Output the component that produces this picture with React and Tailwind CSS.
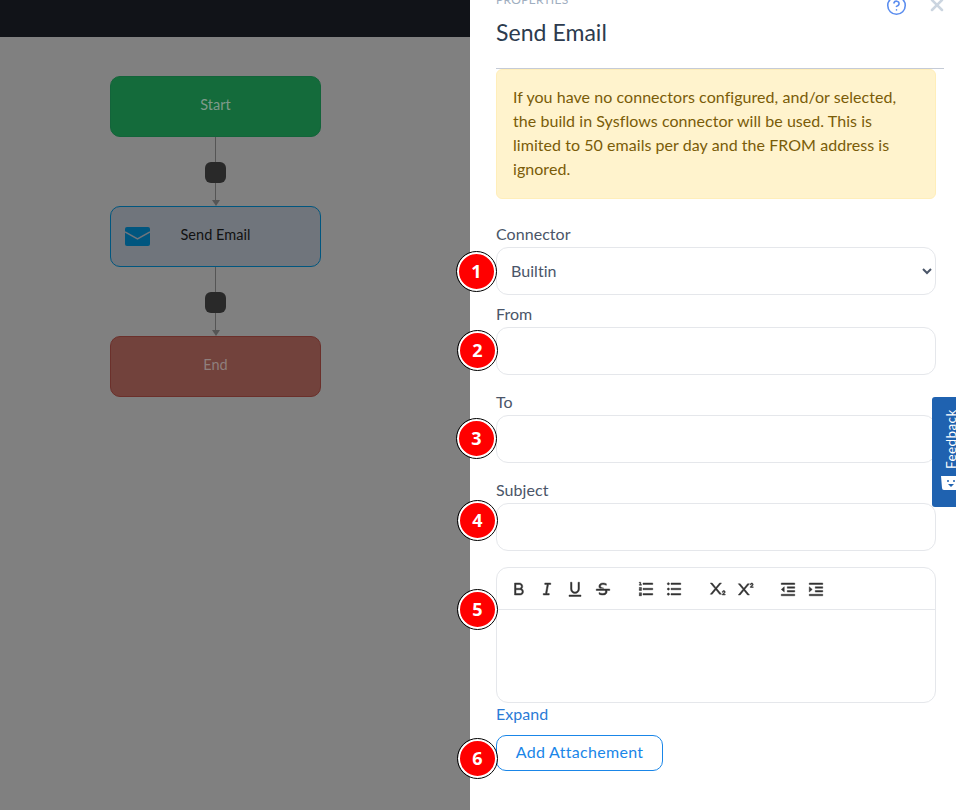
import { CircleHelp, X } from 'lucide-react'
import {
  RiBold,
  RiItalic,
  RiUnderline,
  RiStrikethrough,
  RiListOrdered,
  RiListUnordered,
  RiSubscript,
  RiSuperscript,
  RiIndentDecrease,
  RiIndentIncrease
} from 'react-icons/ri'

const font = 'font-["Lato","Noto_Sans",sans-serif]'

function Connector() {
  return (
    <div className="relative h-[69px] flex flex-col items-center">
      <div className="w-px h-[64px] bg-[#555555]" />
      <div className="w-0 h-0 border-x-[4px] border-x-transparent border-t-[6px] border-t-[#555555]" />
      <div className="absolute top-[25px] left-[95px] w-[21px] h-[21px] rounded-[6px] bg-[#292929]" />
    </div>
  )
}

function Field({ label, marginTop }) {
  return (
    <div className={marginTop}>
      <div className="h-[24px] leading-[22px] text-[#4a5568]">{label}</div>
      <input type="text" className="block w-full h-[48px] bg-white border border-[#e5e7eb] rounded-[12px]" />
    </div>
  )
}

function Badge({ n, top, left }) {
  return (
    <div
      className="absolute w-[39px] h-[39px] rounded-full bg-[#ff0000] border-2 border-white outline outline-1 outline-black flex items-center justify-center text-white font-bold text-[18px] font-['Open_Sans',sans-serif]"
      style={{ top, left }}
    >
      {n}
    </div>
  )
}

export default function App() {
  const toolbarGroups = [
    [RiBold, RiItalic, RiUnderline, RiStrikethrough],
    [RiListOrdered, RiListUnordered],
    [RiSubscript, RiSuperscript],
    [RiIndentDecrease, RiIndentIncrease]
  ]

  return (
    <div className={`relative flex w-[956px] h-[810px] overflow-hidden text-[16px] tracking-[0.05px] ${font}`}>
      {/* dimmed canvas */}
      <div className="w-[470px] shrink-0 bg-[#808080]">
        <div className="h-[37px] bg-[#111318]" />
        <div className="ml-[110px] mt-[39px] w-[211px]">
          <div className="h-[61px] pb-[4px] rounded-[10px] bg-[#146b3b] border border-[#13643a] flex items-center justify-center text-[14.5px] text-[#7f9a8a]">
            Start
          </div>
          <Connector />
          <div className="relative h-[61px] pb-[4px] rounded-[10px] bg-[#70757c] border border-[#00567f] flex items-center justify-center text-[14.5px] text-[#111111]">
            <svg className="absolute left-[14px] top-[20px]" width="25" height="19" viewBox="0 0 25 19">
              <rect width="25" height="19" rx="2" fill="#00567f" />
              <path d="M0 5 L12.5 12 L25 5" fill="none" stroke="#70757c" strokeWidth="1.5" />
            </svg>
            Send Email
          </div>
          <Connector />
          <div className="h-[61px] pb-[4px] rounded-[10px] bg-[#72423c] border border-[#6b302b] flex items-center justify-center text-[14.5px] text-[#8f7f7d]">
            End
          </div>
        </div>
      </div>

      {/* properties panel */}
      <div className="w-[486px] shrink-0 bg-white">
        <div className="relative -mt-[8px] ml-[26px] mr-[12px] h-[77px] border-b border-[#c5cbd6]">
          <div className="text-[12px] leading-[16px] tracking-[0.3px] text-[#a0aec0]">PROPERTIES</div>
          <div className="mt-[8px] text-[23px] leading-[32px] text-[#2d3b4e]">Send Email</div>
          <CircleHelp className="absolute top-[3px] left-[390px] text-[#5b8def]" size={21} strokeWidth={1.8} />
          <X className="absolute top-[3px] left-[431px] text-[#cbd5e0]" size={20} strokeWidth={3} />
        </div>

        <div className="ml-[26px] mr-[20px]">
          <div className="h-[130px] px-[16px] pt-[15px] bg-[#fff3cd] border border-[#ffeeba] rounded-[6px] text-[#7a5c08] leading-[24px]">
            If you have no connectors configured, and/or selected, the build in Sysflows connector will be used. This is limited to 50 emails per day and the FROM address is ignored.
          </div>

          <div className="mt-[24px]">
            <div className="h-[24px] leading-[22px] text-[#4a5568]">Connector</div>
            <select className="block w-full h-[48px] pl-[10px] pr-[2px] pb-[2px] bg-white border border-[#e5e7eb] rounded-[12px] text-[#4a5568]">
              <option>Builtin</option>
            </select>
          </div>
          <Field label="From" marginTop="mt-[8px]" />
          <Field label="To" marginTop="mt-[16px]" />
          <Field label="Subject" marginTop="mt-[16px]" />

          <div className="mt-[16px] h-[136px] border border-[#e5e7eb] rounded-[12px]">
            <div className="h-[42px] pl-[13px] flex items-center gap-[25px] border-b border-[#e5e7eb] text-[#333333]">
              {toolbarGroups.map((group, i) => (
                <div key={i} className="flex items-center gap-[10px]">
                  {group.map((Icon, j) => (
                    <Icon key={j} size={18} stroke="currentColor" strokeWidth={0.6} />
                  ))}
                </div>
              ))}
            </div>
          </div>

          <div className="h-[24px] leading-[22px] text-[#2b7bd6]">Expand</div>
          <button className="mt-[8px] pb-[2px] block w-[167px] h-[36px] rounded-[10px] border border-[#1a86e8] bg-white text-[#1a86e8] text-center tracking-[0.3px]">
            Add Attachement
          </button>
        </div>
      </div>

      {/* numbered callouts */}
      <Badge n={1} top={252} left={457} />
      <Badge n={2} top={331} left={458} />
      <Badge n={3} top={419} left={457} />
      <Badge n={4} top={501} left={458} />
      <Badge n={5} top={590} left={458} />
      <Badge n={6} top={739} left={458} />

      {/* feedback tab */}
      <div className="absolute left-[932px] top-[397px] w-[30px] h-[110px] rounded-l-[3px] bg-[#1f62b0] text-white">
        <div className="absolute top-[12px] left-[11px] h-[60px] text-[13.5px] leading-[16px] tracking-[0.4px] [writing-mode:vertical-rl] rotate-180">
          Feedback
        </div>
        <svg className="absolute left-[9px] top-[79px]" width="17" height="15" viewBox="0 0 17 15">
          <path d="M0 0 H17 V14 H3 Q1 14 1 12 Z" fill="#ffffff" />
          <circle cx="7" cy="5" r="1" fill="#1f62b0" />
          <circle cx="13" cy="5" r="1" fill="#1f62b0" />
          <path d="M7 8 H13 L10 11 Z" fill="#1f62b0" />
        </svg>
      </div>
    </div>
  )
}
